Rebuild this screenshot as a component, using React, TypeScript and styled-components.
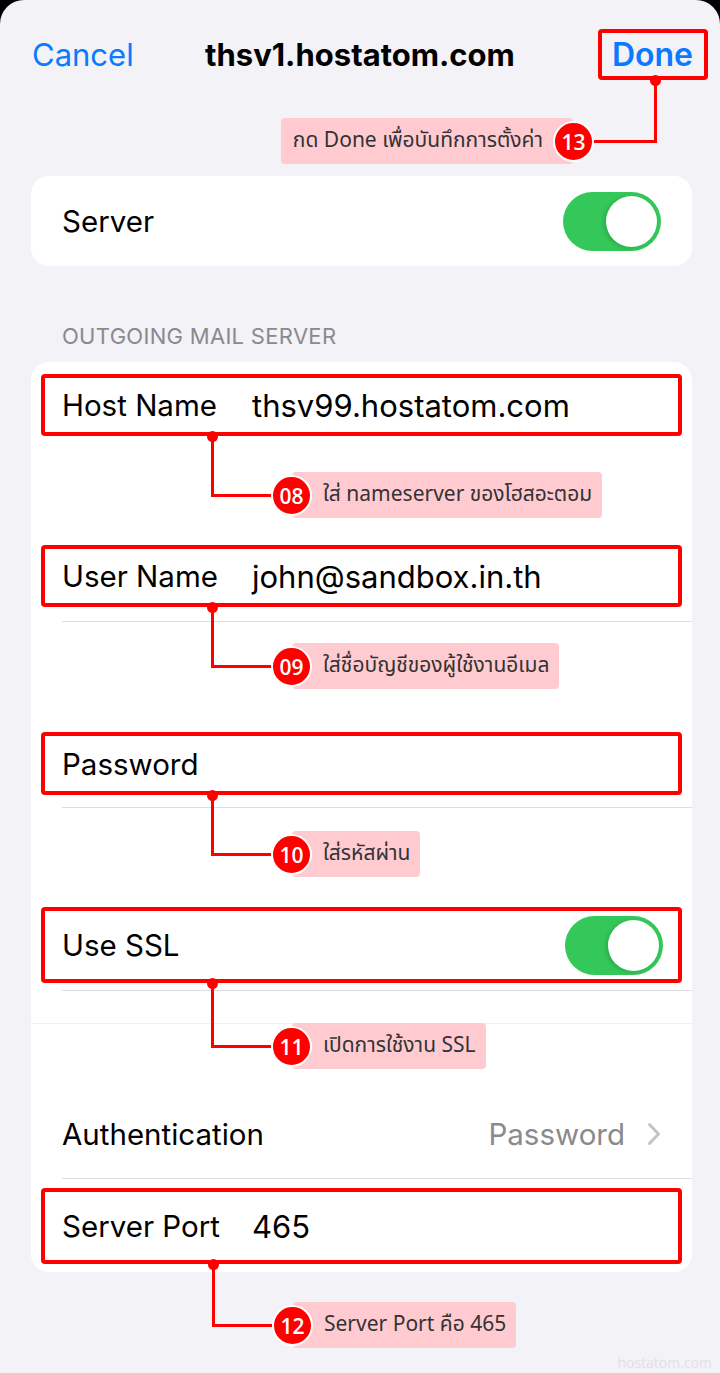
import React from "react";
import styled, { createGlobalStyle } from "styled-components";

const GlobalStyle = createGlobalStyle`
  html, body {
    margin: 0;
    padding: 0;
    background: #000;
  }
  body {
    font-family: Inter, "Noto Sans", sans-serif;
    -webkit-font-smoothing: antialiased;
  }
`;

const red = "#ff0000";

const Sheet = styled.main`
  width: 720px;
  min-height: 1373px;
  box-sizing: border-box;
  background: #f2f2f7;
  border-radius: 24px 24px 0 0;
  overflow: hidden;
`;

const Nav = styled.header`
  display: grid;
  grid-template-columns: 1fr auto 1fr;
  align-items: center;
  height: 108px;
`;

const NavButton = styled.span<{ $bold?: boolean }>`
  color: #0a7aff;
  font-size: ${(p) => (p.$bold ? 32 : 31)}px;
  font-weight: ${(p) => (p.$bold ? 600 : 400)};
`;

const Cancel = styled(NavButton)`
  justify-self: start;
  margin-left: 32px;
`;

const Title = styled.h1`
  margin: 0;
  font-size: 31px;
  font-weight: 700;
  color: #000;
`;

const DoneBox = styled.span`
  justify-self: end;
  margin-right: 12px;
  height: 51px;
  box-sizing: border-box;
  display: flex;
  align-items: center;
  padding: 0 11px 0 10px;
  border: 4px solid ${red};
  border-radius: 4px;
`;

const Card = styled.section<{ $gapTop?: number }>`
  margin: 0 28px 0 31px;
  background: #fff;
  border-radius: 18px;
  padding: ${(p) => (p.$gapTop ? `${p.$gapTop}px 0 8px` : "0")};
`;

const SectionHeader = styled.div`
  padding: 58px 0 14px 62px;
  font-size: 22px;
  line-height: 24px;
  color: #8a8a8e;
  letter-spacing: 0.3px;
`;

const Row = styled.div<{ $boxed?: boolean; $height: number }>`
  display: flex;
  align-items: center;
  box-sizing: border-box;
  height: ${(p) => p.$height}px;
  ${(p) =>
    p.$boxed
      ? `
    margin: 0 10px;
    padding: 0 15px 0 17px;
    border: 4px solid ${red};
    border-radius: 4px;
  `
      : `
    padding: 0 31px;
  `}
`;

const Label = styled.span<{ $fixed?: boolean }>`
  font-size: 29.5px;
  color: #000;
  ${(p) => (p.$fixed ? "width: 190px; flex-shrink: 0;" : "")}
`;

const Value = styled.span`
  font-size: 31px;
  color: #000;
`;

const Detail = styled.span`
  margin-left: auto;
  font-size: 29.5px;
  color: #8a8a8e;
`;

const Chevron = styled.svg`
  margin-left: 22px;
  flex-shrink: 0;
`;

const Toggle = styled.span`
  margin-left: auto;
  position: relative;
  width: 98px;
  height: 59px;
  flex-shrink: 0;
  border-radius: 30px;
  background: #34c759;

  &::after {
    content: "";
    position: absolute;
    top: 4px;
    right: 4px;
    width: 51px;
    height: 51px;
    border-radius: 50%;
    background: #fff;
    box-shadow: -2px 1px 4px rgba(0, 0, 0, 0.15);
  }
`;

const Divider = styled.div<{ $top: number; $full?: boolean; $faint?: boolean }>`
  height: 1px;
  margin-top: ${(p) => p.$top}px;
  margin-left: ${(p) => (p.$full ? 0 : 31)}px;
  background: ${(p) => (p.$faint ? "#f0f0f2" : "#dedee2")};
`;

const CalloutRow = styled.div<{
  $lift: number;
  $height: number;
  $inset: number;
  $flip?: boolean;
}>`
  display: flex;
  align-items: flex-start;
  justify-content: ${(p) => (p.$flip ? "flex-end" : "flex-start")};
  box-sizing: border-box;
  height: ${(p) => p.$height}px;
  margin-top: -${(p) => p.$lift}px;
  ${(p) => (p.$flip ? "padding-right" : "padding-left")}: ${(p) => p.$inset}px;
  position: relative;
`;

const Elbow = styled.span<{ $drop: number; $width: number; $flip?: boolean }>`
  position: relative;
  flex-shrink: 0;
  box-sizing: border-box;
  width: ${(p) => p.$width}px;
  height: ${(p) => p.$drop + 2}px;
  border-bottom: 3px solid ${red};
  ${(p) => (p.$flip ? "border-right" : "border-left")}: 3px solid ${red};

  &::before {
    content: "";
    position: absolute;
    top: -5px;
    ${(p) => (p.$flip ? "right" : "left")}: -7px;
    width: 11px;
    height: 11px;
    border-radius: 50%;
    background: ${red};
  }
`;

const Badge = styled.span<{ $top: number }>`
  position: relative;
  z-index: 1;
  flex-shrink: 0;
  margin-top: ${(p) => p.$top}px;
  width: 41px;
  height: 41px;
  box-sizing: border-box;
  border: 2px solid #fff;
  border-radius: 50%;
  background: #f00;
  color: #fff;
  display: flex;
  align-items: center;
  justify-content: center;
  font-family: "Open Sans", Inter, sans-serif;
  font-size: 21px;
  font-weight: 600;
`;

const Tag = styled.span<{ $top: number; $flip?: boolean }>`
  margin-top: ${(p) => p.$top}px;
  height: 46px;
  line-height: 46px;
  background: #ffcbd1;
  border-radius: 4px;
  font-family: "Noto Sans Thai", Tahoma, "Open Sans", "Noto Sans", sans-serif;
  font-size: 21px;
  color: #333;
  white-space: nowrap;
  ${(p) =>
    p.$flip
      ? "margin-right: -20px; padding: 0 30px 0 12px;"
      : "margin-left: -20px; padding: 0 10px 0 31px;"}
`;

const Watermark = styled.footer`
  height: 21px;
  line-height: 21px;
  padding-right: 8px;
  text-align: right;
  font-family: "Open Sans", sans-serif;
  font-size: 14px;
  color: #e1e1e6;
`;

type CalloutProps = {
  num: string;
  text: string;
  drop: number;
  lift: number;
  height: number;
  inset: number;
  flip?: boolean;
};

function Callout({ num, text, drop, lift, height, inset, flip }: CalloutProps) {
  const badgeTop = drop - 20;
  const tagTop = drop - 23;
  if (flip) {
    return (
      <CalloutRow $lift={lift} $height={height} $inset={inset} $flip>
        <Tag $top={tagTop} $flip>
          {text}
        </Tag>
        <Badge $top={badgeTop}>{num}</Badge>
        <Elbow $drop={drop} $width={63} $flip />
      </CalloutRow>
    );
  }
  return (
    <CalloutRow $lift={lift} $height={height} $inset={inset}>
      <Elbow $drop={drop} $width={60} />
      <Badge $top={badgeTop}>{num}</Badge>
      <Tag $top={tagTop}>{text}</Tag>
    </CalloutRow>
  );
}

export default function App() {
  return (
    <>
      <GlobalStyle />
      <Sheet>
        <Nav>
          <Cancel>Cancel</Cancel>
          <Title>thsv1.hostatom.com</Title>
          <DoneBox>
            <NavButton $bold>Done</NavButton>
          </DoneBox>
        </Nav>
        <Callout
          num="13"
          text="กด Done เพื่อบันทึกการตั้งค่า"
          drop={61}
          lift={28}
          height={96}
          inset={63}
          flip
        />

        <Card>
          <Row $height={90}>
            <Label>Server</Label>
            <Toggle />
          </Row>
        </Card>

        <SectionHeader>OUTGOING MAIL SERVER</SectionHeader>

        <Card $gapTop={12}>
          <Row $boxed $height={62}>
            <Label $fixed>Host Name</Label>
            <Value>thsv99.hostatom.com</Value>
          </Row>
          <Callout
            num="08"
            text="ใส่ nameserver ของโฮสอะตอม"
            drop={59}
            lift={0}
            height={109}
            inset={180}
          />

          <Row $boxed $height={62}>
            <Label $fixed>User Name</Label>
            <Value>john@sandbox.in.th</Value>
          </Row>
          <Divider $top={14} />
          <Callout
            num="09"
            text="ใส่ชื่อบัญชีของผู้ใช้งานอีเมล"
            drop={59}
            lift={15}
            height={125}
            inset={180}
          />

          <Row $boxed $height={63}>
            <Label>Password</Label>
          </Row>
          <Divider $top={12} />
          <Callout
            num="10"
            text="ใส่รหัสผ่าน"
            drop={59}
            lift={13}
            height={112}
            inset={180}
          />

          <Row $boxed $height={76}>
            <Label>Use SSL</Label>
            <Toggle />
          </Row>
          <Divider $top={7} />
          <Divider $top={32} $full $faint />
          <Callout
            num="11"
            text="เปิดการใช้งาน SSL"
            drop={63}
            lift={41}
            height={107}
            inset={180}
          />

          <Row $height={88}>
            <Label>Authentication</Label>
            <Detail>Password</Detail>
            <Chevron width="14" height="24" viewBox="0 0 14 24">
              <path
                d="M2.5 2.5 L11.5 12 L2.5 21.5"
                fill="none"
                stroke="#c4c4c7"
                strokeWidth="3"
                strokeLinecap="round"
                strokeLinejoin="round"
              />
            </Chevron>
          </Row>
          <Divider $top={0} />
          <Row $boxed $height={76} style={{ marginTop: 9 }}>
            <Label $fixed>Server Port</Label>
            <Value>465</Value>
          </Row>
        </Card>

        <Callout
          num="12"
          text="Server Port คือ 465"
          drop={61}
          lift={8}
          height={88}
          inset={212}
        />
        <Watermark>hostatom.com</Watermark>
      </Sheet>
    </>
  );
}
